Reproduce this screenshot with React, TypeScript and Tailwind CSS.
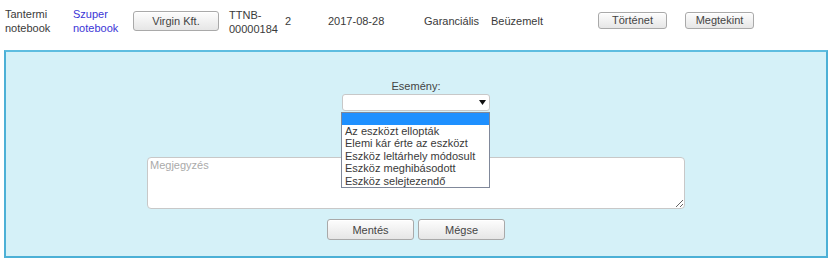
import React from "react";

const btn =
  "flex items-center justify-center rounded-[3px] border border-[#a9a9a9] bg-gradient-to-b from-[#fdfdfd] to-[#e6e6e6] text-[11px] text-[#444] shadow-[inset_0_1px_0_#fff]";

export default function App() {
  const options = [
    "Az eszközt ellopták",
    "Elemi kár érte az eszközt",
    "Eszköz leltárhely módosult",
    "Eszköz meghibásodott",
    "Eszköz selejtezendő",
  ];
  return (
    <div className="w-[838px] h-[259px] bg-white font-['Liberation_Sans',Arial,sans-serif] text-[11px] leading-[14px] text-[#3a3a3a] overflow-hidden">
      <div className="flex items-center h-[36px] mt-[3px] pl-[5px]">
        <div className="w-[68px]">Tantermi<br />notebook</div>
        <div className="w-[60px] text-[#3a35d6]">Szuper<br />notebook</div>
        <div className="w-[96px]">
          <div className={btn + " w-[86px] h-[20px]"}>Virgin Kft.</div>
        </div>
        <div className="w-[56px] pt-[2px]">TTNB-<br />00000184</div>
        <div className="w-[43px]">2</div>
        <div className="w-[96px]">2017-08-28</div>
        <div className="w-[67px]">Garanciális</div>
        <div className="w-[107px]">Beüzemelt</div>
        <div className="w-[87px] -mt-[2px]">
          <div className={btn + " w-[69px] h-[17px]"}>Történet</div>
        </div>
        <div className="-mt-[2px]">
          <div className={btn + " w-[69px] h-[17px]"}>Megtekint</div>
        </div>
      </div>
      <div className="ml-[4px] mt-[11px] w-[824px] h-[208px] border-2 border-[#4cb0d6] border-t-[#5ebde0] bg-[#d5f1f8] flex flex-col items-center">
        <div className="mt-[27px] h-[14px] text-[#444]">Esemény:</div>
        <div className="relative mt-[1px]">
          <div className="w-[148px] h-[17px] rounded-[3px] border border-[#c8c8c8] bg-white flex items-center justify-end pr-[3px]">
            <svg width="7" height="5" viewBox="0 0 7 5"><path d="M0 0H7L3.5 5Z" fill="#111" /></svg>
          </div>
          <div className="absolute left-[-1px] top-[18px] w-[149px] z-10 border border-[#80889a] bg-white">
            <div className="h-[12px] bg-[#1e90ff]" />
            {options.map((o) => (
              <div key={o} className="h-[12.4px] leading-[12px] pl-[3px] text-[11px] text-[#3a3a3a] whitespace-nowrap">
                {o}
              </div>
            ))}
          </div>
        </div>
        <textarea
          placeholder="Megjegyzés"
          className="mt-[46px] w-[538px] h-[52px] rounded-[4px] border border-[#c8c8c8] bg-white px-[2px] py-[1px] text-[11px] leading-[13px] font-['Liberation_Sans',Arial,sans-serif] placeholder:text-[#aaa] outline-none"
        />
        <div className="mt-[10px] flex gap-[4px]">
          <div className={btn + " w-[87px] h-[21px]"}>Mentés</div>
          <div className={btn + " w-[87px] h-[21px]"}>Mégse</div>
        </div>
      </div>
    </div>
  );
}
